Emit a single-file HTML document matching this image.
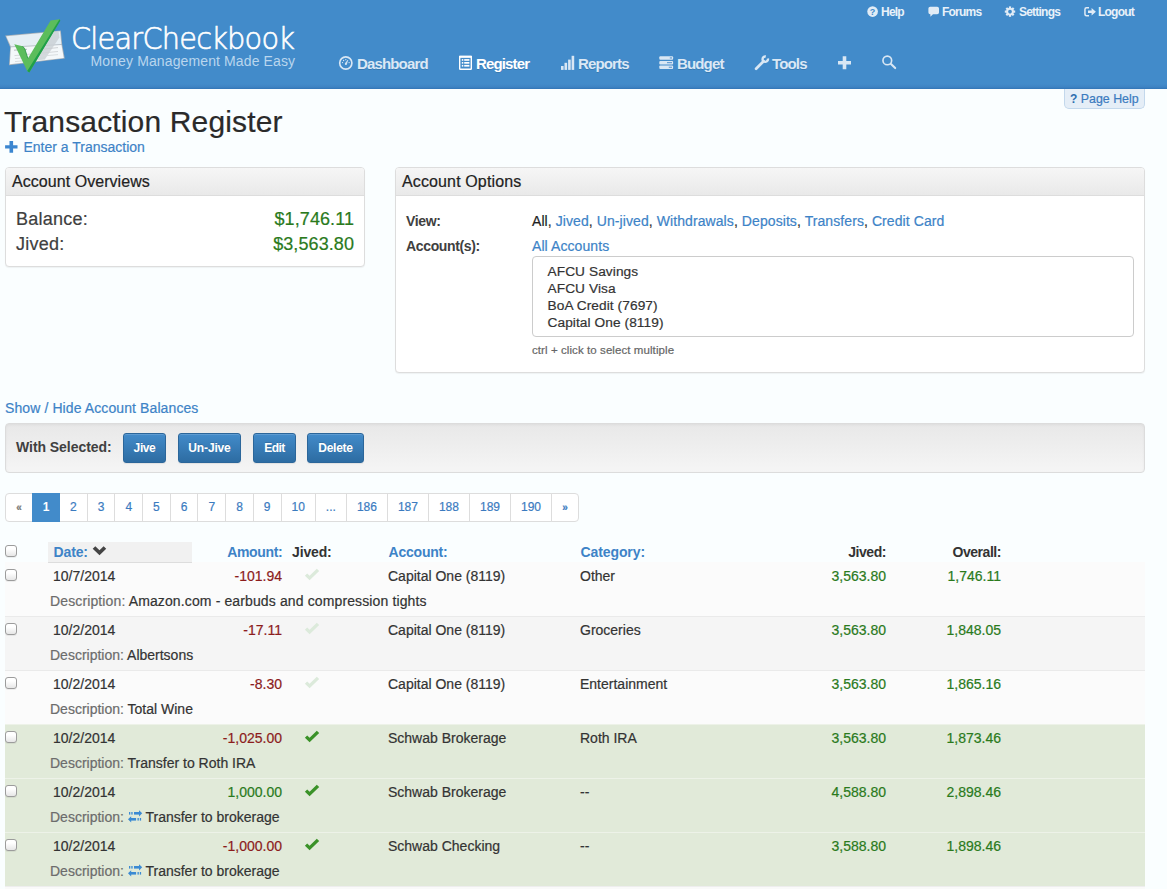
<!DOCTYPE html>
<html lang="en">
<head>
<meta charset="utf-8">
<title>Transaction Register - ClearCheckbook</title>
<style>
*{box-sizing:border-box}
html,body{margin:0;padding:0}
body{width:1167px;height:889px;overflow:hidden;background:#fafeff;font-family:"Liberation Sans",Arial,Helvetica,sans-serif;font-size:14px;line-height:20px;color:#333;position:relative;letter-spacing:.08px;-webkit-text-stroke:.2px currentColor}
a{color:#3d83c7;text-decoration:none}
.abs{position:absolute;white-space:nowrap}
#hdr{position:absolute;left:0;top:0;width:1167px;height:89px;background:linear-gradient(to bottom,#428bca 0,#428bca 84px,#3e83c3 87px,#3275b6 89px)}
#brand{left:71px;top:21px;font-family:"DejaVu Sans Light","DejaVu Sans","Liberation Sans",sans-serif;font-weight:200;font-size:30.200px;line-height:36px;color:#fff;letter-spacing:-.8px;-webkit-text-stroke:.62px #fff;transform:scaleX(.953);transform-origin:0 0}
#tag{-webkit-text-stroke:0;left:90.500px;top:52px;font-size:14px;line-height:18px;color:#b9d6ee;letter-spacing:.12px}
.tl{top:3.800px;font-size:12px;line-height:16px;color:#e8f1f9;font-weight:bold;letter-spacing:-.78px}
.nv{top:54px;font-size:15px;line-height:20px;color:#dbe8f5;font-weight:bold;letter-spacing:-.85px;text-shadow:0 1px 0 rgba(0,0,0,.12)}
.nv.on{color:#fff}
svg.ic{position:absolute;overflow:visible}
#pghelp{left:1064px;top:89px;width:81px;height:20px;background:#e5eef7;border:1px solid #c3d8ec;border-top:none;border-radius:0 0 5px 5px;font-size:12.400px;line-height:20px;letter-spacing:0;color:#3b7bbf;padding-left:5px}
#pghelp b{font-size:12px;color:#2f6fb0}
h1{left:4px;top:102px;margin:0;font-size:30px;line-height:40px;font-weight:normal;color:#2a2a2a;letter-spacing:.15px}
#enter{left:23.500px;top:138px;font-size:14px;line-height:18px;letter-spacing:0}
.panel{position:absolute;background:#fff;border:1px solid #ddd;border-radius:4px;box-shadow:0 1px 1px rgba(0,0,0,.05)}
.ph{height:28px;background:linear-gradient(#f6f6f6,#e9e9e9);border-bottom:1px solid #ddd;border-radius:3px 3px 0 0;font-size:16px;line-height:27px;padding-left:6px;color:#222;letter-spacing:.05px}
.big{font-size:18px;line-height:25px;color:#333}
.big.l{letter-spacing:.25px;color:#404040}
.grn{color:#2a7a1c}
.red{color:#8c1c1c}
.lbl{font-weight:bold;font-size:14px;letter-spacing:-.35px;color:#404040}
#sel{left:532px;top:256px;width:602px;height:81px;border:1px solid #ccc;border-radius:4px;background:#fff;padding:5.600px 0 0 14.500px;font-size:13.700px;line-height:17px;color:#333}
#bar{left:5px;top:423px;width:1140px;height:50px;border:1px solid #dcdcdc;border-radius:4px;background:linear-gradient(#e8e8e8,#f5f5f5);box-shadow:inset 0 1px 3px rgba(0,0,0,.05)}
.btn{top:433px;height:30px;border:1px solid #2b669a;border-radius:3px;background:linear-gradient(#428bca,#2d6ca2);box-shadow:inset 0 1px 0 rgba(255,255,255,.15),0 1px 1px rgba(0,0,0,.075);color:#fff;font-weight:bold;font-size:12px;line-height:28.600px;text-align:center;letter-spacing:-.4px;text-shadow:0 -1px 0 rgba(0,0,0,.15)}
#pag{left:5px;top:493px;height:29px;font-size:12px;line-height:27px;color:#3b7bbf;display:flex;letter-spacing:0}
#pag span{display:block;border:1px solid #ddd;margin-left:-1px;padding:0 10px;background:#fff;height:29px}
#pag span:first-child{margin-left:0;border-radius:4px 0 0 4px;padding:0;width:28px;text-align:center;color:#777;font-size:10px;font-weight:bold}
#pag span:last-child{border-radius:0 4px 4px 0;padding:0;width:28px;text-align:center;font-size:10px;font-weight:bold}
#pag span.cur{background:#428bca;border-color:#428bca;color:#fff;font-weight:bold;position:relative;padding:0 9.670px}
.th{z-index:3;top:542px;font-weight:bold;font-size:14px;line-height:20px;letter-spacing:-.45px}
.th.bl{color:#3d83c7}
.row{position:absolute;left:5px;width:1140px;height:54px;border-top:1px solid #eaeaea}
.row.a{background:#fbfbfb}
.row.b{background:#f5f5f5}
.row.g{background:#e1ead9;border-top-color:#edf2e8}
.row .abs{line-height:20px;font-size:14px;letter-spacing:0}
.row .r2{letter-spacing:0}
.cb{position:absolute;left:0;top:6px;width:12px;height:12px;border:1px solid #9c9c9c;border-radius:3px;background:linear-gradient(#fff 30%,#e6e6e6);box-shadow:0 1px 0 rgba(0,0,0,.06)}
.r1{top:3px}
.r2{top:28px}
.dsc{color:#6c6c6c}
.lbl,.th,.nv,.tl,.btn,#pag .cur,#pghelp b{-webkit-text-stroke:0}
</style>
</head>
<body>
<div id="hdr"></div>
<svg class="ic" style="left:0;top:0" width="1167" height="89" viewBox="0 0 1167 89">
<!-- logo: cheque + tick -->
<g>
<polygon points="5.2,35.6 60.8,30.4 62.2,44.6 64.8,58.6 9,65.2 10.2,47.2" fill="#aab2b9"/>
<polygon points="6.2,36.3 60.1,31.2 61.4,44.3 10.9,46.6" fill="#e6eff5"/>
<polygon points="10.9,47.3 61.5,45 63.8,57.9 9.8,64.3" fill="#f4f8fa"/>
<polygon points="52,32.200 58.600,31.500 59.400,37.500 44.800,59.400 37,60.300" fill="#c9d0d5" opacity=".8"/>
<g stroke="#b3b8bb" stroke-width=".9" fill="none"><path d="M14,50.2 L27,49.3"/><path d="M14.5,55.6 L58,51.5" stroke="#d0d4d6"/><path d="M15,58.6 L58,54.6" stroke="#d6dadc"/><path d="M15,61.6 L40,59.3" stroke="#d6dadc"/><path d="M44,49 L58,47.6" stroke="#c9cdd0"/></g>
<polygon points="14.3,44.2 22.6,46.2 24.8,48.8 27.9,58.6 50.6,20.6 59.5,19.3 60.2,20.6 29.3,72.6 27.2,71" fill="#5cbd5c"/>
<polygon points="59.5,19.3 60.3,20.7 29.3,72.6 27.2,71 28.2,69.6" fill="#1f9f49"/>
<path d="M22.6,46.2 L24.8,48.8 L27.9,58.6" fill="none" stroke="#2f9a4a" stroke-width=".9"/>
</g>
<!-- top links icons -->
<g fill="#e1ecf6">
<circle cx="872.6" cy="11.6" r="5.3"/>
<path d="M930.2,6.8 h7 a1.8,1.8 0 0 1 1.8,1.8 v3.8 a1.8,1.8 0 0 1 -1.8,1.8 h-4.2 l-2.6,2.6 v-2.6 h-0.2 a1.8,1.8 0 0 1 -1.8,-1.8 v-3.8 a1.8,1.8 0 0 1 1.800,-1.8 z"/>
<g transform="translate(1010,11.6)"><circle r="2.9" fill="none" stroke="#e1ecf6" stroke-width="2.1"/><g transform="rotate(0)"><rect x="-1.1" y="-5.200" width="2.200" height="2"/><rect x="-1.1" y="3.200" width="2.200" height="2"/></g><g transform="rotate(45)"><rect x="-1.1" y="-5.200" width="2.200" height="2"/><rect x="-1.1" y="3.200" width="2.200" height="2"/></g><g transform="rotate(90)"><rect x="-1.1" y="-5.200" width="2.200" height="2"/><rect x="-1.1" y="3.200" width="2.200" height="2"/></g><g transform="rotate(135)"><rect x="-1.1" y="-5.200" width="2.200" height="2"/><rect x="-1.1" y="3.200" width="2.200" height="2"/></g></g>
<path d="M1089,7.1 v1.5 h-2.3 a1,1 0 0 0 -1,1 v4.4 a1,1 0 0 0 1,1 h2.300 v1.500 h-2.500 a2.300,2.300 0 0 1 -2.300,-2.300 v-4.800 a2.300,2.300 0 0 1 2.300,-2.300 z"/>
<path d="M1088,10.500 h3.600 v-2.500 l4.300,3.800 l-4.300,3.800 v-2.500 h-3.600 z"/>
</g>
<text x="872.6" y="15" text-anchor="middle" font-family="Liberation Sans, sans-serif" font-weight="bold" font-size="9" fill="#428bca">?</text>
<!-- nav icons -->
<g fill="#d9e7f4" stroke="none">
<g><circle cx="345.8" cy="63" r="6.100" fill="none" stroke="#d9e7f4" stroke-width="1.650"/><path d="M345.300,63.300 L347.900,60 L346.600,64 z" stroke="#d9e7f4" stroke-width=".5"/><circle cx="345.900" cy="64" r="1.050"/><circle cx="342.500" cy="62.600" r=".65"/><circle cx="343.600" cy="60.500" r=".65"/><circle cx="345.800" cy="59.700" r=".65"/><circle cx="349.100" cy="62.600" r=".65"/></g>
<rect x="561" y="66" width="2.600" height="3.900"/><rect x="564.500" y="62.800" width="2.600" height="7.100"/><rect x="568.100" y="59.600" width="2.600" height="10.300"/><rect x="571.600" y="55.800" width="2.600" height="14.100"/>
<rect x="659.300" y="56.200" width="13.800" height="3.500" rx="1"/><rect x="659.300" y="60.900" width="13.800" height="3.500" rx="1"/><rect x="659.300" y="65.500" width="13.800" height="3.500" rx="1"/>
<g fill="#5b97cf"><rect x="669.800" y="57.400" width="2.200" height="1.100"/><rect x="667" y="62.100" width="5" height="1.100"/><rect x="668.800" y="66.700" width="3.200" height="1.100"/></g>
<path d="M756.100,68.800 L763.600,61.200" stroke="#d9e7f4" stroke-width="2.700" stroke-linecap="round" fill="none"/><path d="M767.900,58.600 A2.700,2.700 0 1 1 765.800,56.500" stroke="#d9e7f4" stroke-width="2.400" fill="none"/>
<path d="M842.700,56.200 h3.600 v4.700 h4.700 v3.600 h-4.700 v4.700 h-3.600 v-4.700 h-4.700 v-3.600 h4.700 z"/>
<circle cx="887.300" cy="60.400" r="4.350" fill="none" stroke="#d9e7f4" stroke-width="1.650"/><path d="M891,64.100 L895.200,68.100" stroke="#d9e7f4" stroke-width="2.100" stroke-linecap="round"/>
</g>
<g><rect x="459.700" y="56.500" width="11.600" height="12.800" rx=".6" fill="none" stroke="#fff" stroke-width="1.400"/><rect x="459" y="55.800" width="13" height="2" fill="#fff"/><g fill="#fff"><rect x="461.800" y="59.100" width="1.500" height="1.700"/><rect x="464.200" y="59.100" width="5.200" height="1.700"/><rect x="461.800" y="62" width="1.500" height="1.700"/><rect x="464.200" y="62" width="5.200" height="1.700"/><rect x="461.800" y="64.900" width="1.500" height="1.700"/><rect x="464.200" y="64.900" width="5.200" height="1.700"/></g></g>
</svg>
<div id="brand" class="abs">ClearCheckbook</div>
<div id="tag" class="abs">Money Management Made Easy</div>

<div class="abs tl" style="left:881px">Help</div>
<div class="abs tl" style="left:942px">Forums</div>
<div class="abs tl" style="left:1019px">Settings</div>
<div class="abs tl" style="left:1098px">Logout</div>

<div class="abs nv" style="left:357px">Dashboard</div>
<div class="abs nv on" style="left:476px">Register</div>
<div class="abs nv" style="left:578px">Reports</div>
<div class="abs nv" style="left:677px">Budget</div>
<div class="abs nv" style="left:772px">Tools</div>

<div id="pghelp" class="abs"><b>?</b> Page Help</div>
<h1 class="abs">Transaction Register</h1>
<svg class="ic" style="left:5px;top:141px" width="13" height="12" viewBox="0 0 13 12"><path d="M4.500,0 h3.600 v4.200 h4.400 v3.400 h-4.400 v4.200 h-3.600 v-4.200 h-4.400 v-3.400 h4.400 z" fill="#3b86d0"/></svg>
<div id="enter" class="abs"><a href="#">Enter a Transaction</a></div>

<div class="panel" style="left:5px;top:167px;width:360px;height:100px">
  <div class="ph">Account Overviews</div>
  <div class="abs big l" style="left:10px;top:39px">Balance:</div>
  <div class="abs big grn" style="right:10px;top:39px">$1,746.11</div>
  <div class="abs big l" style="left:10px;top:63.500px">Jived:</div>
  <div class="abs big grn" style="right:10px;top:63.500px">$3,563.80</div>
</div>

<div class="panel" style="left:395px;top:167px;width:750px;height:206px">
  <div class="ph" style="letter-spacing:.13px">Account Options</div>
</div>
<div class="abs lbl" style="left:406px;top:211px">View:</div>
<div class="abs lbl" style="left:406px;top:236px">Account(s):</div>
<div class="abs" style="left:532px;top:211px"><span style="color:#222">All</span>, <a href="#">Jived</a>, <a href="#">Un-jived</a>, <a href="#">Withdrawals</a>, <a href="#">Deposits</a>, <a href="#">Transfers</a>, <a href="#">Credit Card</a></div>
<div class="abs" style="left:532px;top:236px"><a href="#">All Accounts</a></div>
<div id="sel" class="abs">AFCU Savings<br>AFCU Visa<br>BoA Credit (7697)<br>Capital One (8119)</div>
<div class="abs" style="left:532px;top:342px;font-size:11.5px;line-height:16px;color:#666">ctrl + click to select multiple</div>

<div class="abs" style="left:5px;top:398px;letter-spacing:.1px"><a href="#">Show / Hide Account Balances</a></div>

<div id="bar" class="abs"></div>
<div class="abs lbl" style="left:16px;top:437px;letter-spacing:-.05px">With Selected:</div>
<div class="abs btn" style="left:123px;width:43px">Jive</div>
<div class="abs btn" style="left:178px;width:63px;letter-spacing:-.15px">Un-Jive</div>
<div class="abs btn" style="left:253px;width:43px;letter-spacing:-.5px">Edit</div>
<div class="abs btn" style="left:307px;width:57px;letter-spacing:-.27px">Delete</div>

<div id="pag" class="abs"><span>«</span><span class="cur">1</span><span>2</span><span>3</span><span>4</span><span>5</span><span>6</span><span>7</span><span>8</span><span>9</span><span>10</span><span>...</span><span>186</span><span>187</span><span>188</span><span>189</span><span>190</span><span>»</span></div>

<div class="cb" style="left:5px;top:544.500px"></div>
<div class="abs" style="left:48px;top:542px;width:144px;height:21px;background:#f1f1f1;border-bottom:1px solid #ddd;z-index:2"></div>
<div class="abs th bl" style="left:53.500px;letter-spacing:-.12px">Date:</div>
<svg class="ic" style="left:92px;top:545px;z-index:3" width="16" height="12" viewBox="92 545 16 12"><polygon points="92.700,548.700 95.300,546.200 99.500,550.300 103.600,546.200 106.200,548.700 99.500,555.300" fill="#444"/></svg>
<div class="abs th bl" style="left:182.300px;width:100px;text-align:right;letter-spacing:-.36px">Amount:</div>
<div class="abs th" style="left:292px;letter-spacing:-.15px">Jived:</div>
<div class="abs th bl" style="left:388.500px;letter-spacing:-.21px">Account:</div>
<div class="abs th bl" style="left:580.500px;letter-spacing:-.1px">Category:</div>
<div class="abs th" style="left:786px;width:100px;text-align:right">Jived:</div>
<div class="abs th" style="left:901px;width:100px;text-align:right">Overall:</div>

<div class="row a" style="top:562px;border-top-color:#fbfbfb">
  <div class="cb"></div>
  <svg class="ic" style="left:299px;top:5px" width="16" height="14" viewBox="304 5 16 14"><polygon points="304.900,12.700 307.200,10.400 309.600,12.700 316.800,5.700 319.200,7.900 309.600,17.300" fill="#dceadb"/></svg>
  <div class="abs r1" style="left:48px">10/7/2014</div>
  <div class="abs r1 red" style="left:177px;width:100px;text-align:right">-101.94</div>
  <div class="abs r1" style="left:383px">Capital One (8119)</div>
  <div class="abs r1" style="left:575px">Other</div>
  <div class="abs r1 grn" style="left:781px;width:100px;text-align:right">3,563.80</div>
  <div class="abs r1 grn" style="left:896px;width:100px;text-align:right">1,746.11</div>
  <div class="abs r2" style="left:45px;letter-spacing:.125px"><span class="dsc">Description:</span> Amazon.com - earbuds and compression tights</div>
</div>
<div class="row b" style="top:616px">
  <div class="cb"></div>
  <svg class="ic" style="left:299px;top:5px" width="16" height="14" viewBox="304 5 16 14"><polygon points="304.900,12.700 307.200,10.400 309.600,12.700 316.800,5.700 319.200,7.900 309.600,17.300" fill="#dceadb"/></svg>
  <div class="abs r1" style="left:48px">10/2/2014</div>
  <div class="abs r1 red" style="left:177px;width:100px;text-align:right">-17.11</div>
  <div class="abs r1" style="left:383px">Capital One (8119)</div>
  <div class="abs r1" style="left:575px">Groceries</div>
  <div class="abs r1 grn" style="left:781px;width:100px;text-align:right">3,563.80</div>
  <div class="abs r1 grn" style="left:896px;width:100px;text-align:right">1,848.05</div>
  <div class="abs r2" style="left:45px"><span class="dsc">Description:</span> Albertsons</div>
</div>
<div class="row a" style="top:670px">
  <div class="cb"></div>
  <svg class="ic" style="left:299px;top:5px" width="16" height="14" viewBox="304 5 16 14"><polygon points="304.900,12.700 307.200,10.400 309.600,12.700 316.800,5.700 319.200,7.900 309.600,17.300" fill="#dceadb"/></svg>
  <div class="abs r1" style="left:48px">10/2/2014</div>
  <div class="abs r1 red" style="left:177px;width:100px;text-align:right">-8.30</div>
  <div class="abs r1" style="left:383px">Capital One (8119)</div>
  <div class="abs r1" style="left:575px">Entertainment</div>
  <div class="abs r1 grn" style="left:781px;width:100px;text-align:right">3,563.80</div>
  <div class="abs r1 grn" style="left:896px;width:100px;text-align:right">1,865.16</div>
  <div class="abs r2" style="left:45px"><span class="dsc">Description:</span> Total Wine</div>
</div>
<div class="row g" style="top:724px">
  <div class="cb"></div>
  <svg class="ic" style="left:299px;top:5px" width="16" height="14" viewBox="304 5 16 14"><polygon points="304.900,12.700 307.200,10.400 309.600,12.700 316.800,5.700 319.200,7.900 309.600,17.300" fill="#3a9228"/></svg>
  <div class="abs r1" style="left:48px">10/2/2014</div>
  <div class="abs r1 red" style="left:177px;width:100px;text-align:right">-1,025.00</div>
  <div class="abs r1" style="left:383px">Schwab Brokerage</div>
  <div class="abs r1" style="left:575px">Roth IRA</div>
  <div class="abs r1 grn" style="left:781px;width:100px;text-align:right">3,563.80</div>
  <div class="abs r1 grn" style="left:896px;width:100px;text-align:right">1,873.46</div>
  <div class="abs r2" style="left:45px"><span class="dsc">Description:</span> Transfer to Roth IRA</div>
</div>
<div class="row g" style="top:778px">
  <div class="cb"></div>
  <svg class="ic" style="left:299px;top:5px" width="16" height="14" viewBox="304 5 16 14"><polygon points="304.900,12.700 307.200,10.400 309.600,12.700 316.800,5.700 319.200,7.900 309.600,17.300" fill="#3a9228"/></svg>
  <div class="abs r1" style="left:48px">10/2/2014</div>
  <div class="abs r1 grn" style="left:177px;width:100px;text-align:right">1,000.00</div>
  <div class="abs r1" style="left:383px">Schwab Brokerage</div>
  <div class="abs r1" style="left:575px">--</div>
  <div class="abs r1 grn" style="left:781px;width:100px;text-align:right">4,588.80</div>
  <div class="abs r1 grn" style="left:896px;width:100px;text-align:right">2,898.46</div>
  <div class="abs r2" style="left:45px"><span class="dsc">Description:</span> <svg style="display:inline-block;vertical-align:.4px;overflow:visible" width="14" height="13" viewBox="129 808 14 13"><g fill="#3b8ad3"><rect x="130" y="811" width="1.300" height="2.600"/><rect x="132.300" y="811" width="1.300" height="2.600"/><rect x="135" y="811" width="5.600" height="2.600"/><polygon points="140,809.200 143.200,812.300 140,815.400"/><rect x="140.800" y="817" width="1.300" height="2.600"/><rect x="138.500" y="817" width="1.300" height="2.600"/><rect x="131.800" y="817" width="5.300" height="2.600"/><polygon points="132.200,815.200 129,818.300 132.200,821.400"/></g></svg> Transfer to brokerage</div>
</div>
<div class="row g" style="top:832px">
  <div class="cb"></div>
  <svg class="ic" style="left:299px;top:5px" width="16" height="14" viewBox="304 5 16 14"><polygon points="304.900,12.700 307.200,10.400 309.600,12.700 316.800,5.700 319.200,7.900 309.600,17.300" fill="#3a9228"/></svg>
  <div class="abs r1" style="left:48px">10/2/2014</div>
  <div class="abs r1 red" style="left:177px;width:100px;text-align:right">-1,000.00</div>
  <div class="abs r1" style="left:383px">Schwab Checking</div>
  <div class="abs r1" style="left:575px">--</div>
  <div class="abs r1 grn" style="left:781px;width:100px;text-align:right">3,588.80</div>
  <div class="abs r1 grn" style="left:896px;width:100px;text-align:right">1,898.46</div>
  <div class="abs r2" style="left:45px"><span class="dsc">Description:</span> <svg style="display:inline-block;vertical-align:.4px;overflow:visible" width="14" height="13" viewBox="129 808 14 13"><g fill="#3b8ad3"><rect x="130" y="811" width="1.300" height="2.600"/><rect x="132.300" y="811" width="1.300" height="2.600"/><rect x="135" y="811" width="5.600" height="2.600"/><polygon points="140,809.200 143.200,812.300 140,815.400"/><rect x="140.800" y="817" width="1.300" height="2.600"/><rect x="138.500" y="817" width="1.300" height="2.600"/><rect x="131.800" y="817" width="5.300" height="2.600"/><polygon points="132.200,815.200 129,818.300 132.200,821.400"/></g></svg> Transfer to brokerage</div>
</div>
<div class="abs" style="left:5px;top:886px;width:1140px;height:3px;background:#fafafa;border-top:1px solid #eee"></div>
</body>
</html>
